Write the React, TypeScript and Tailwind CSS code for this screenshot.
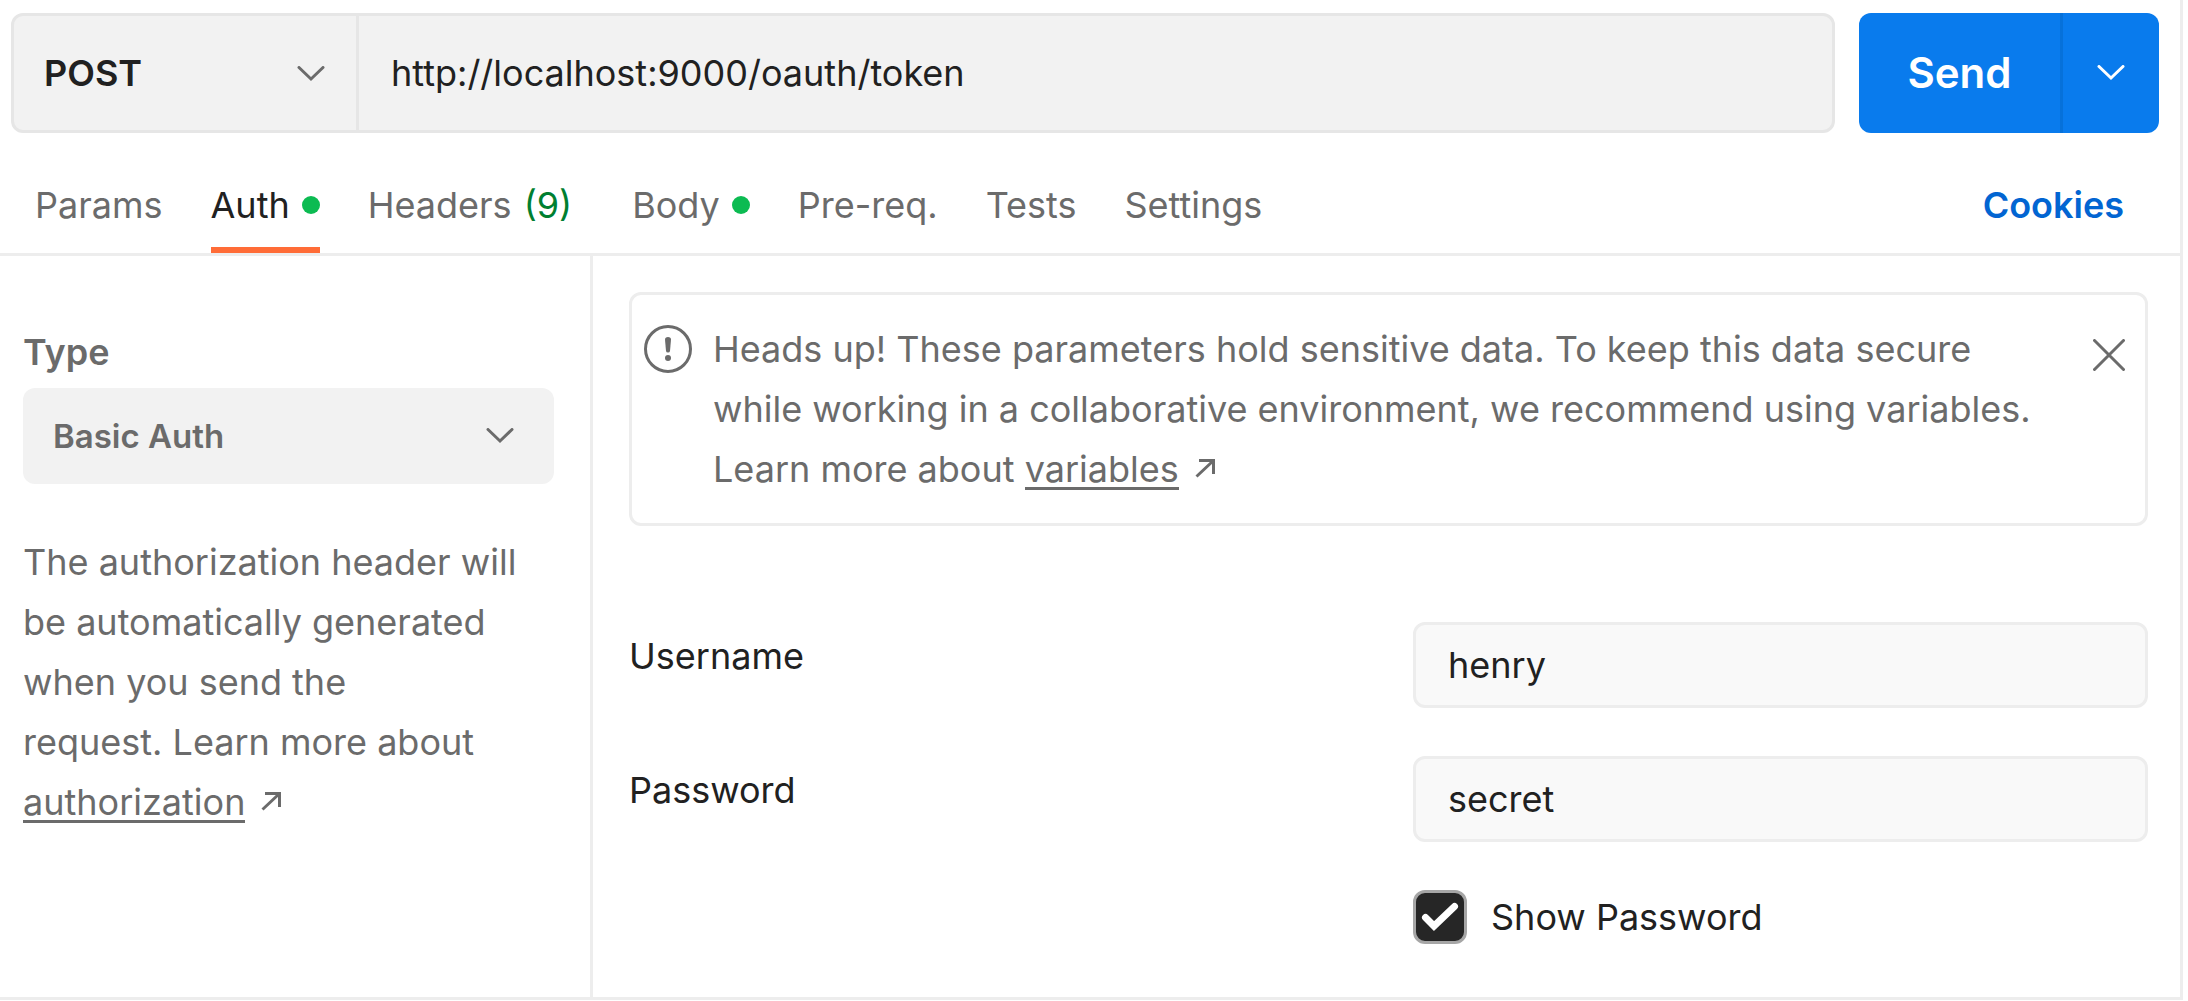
import type { ReactNode } from "react";

const INK = "text-[#212121]";

function Chevron({ className }: { className?: string }) {
  return (
    <svg className={className} viewBox="0 0 28 16" width="28" height="16" fill="none" stroke="currentColor" strokeWidth="3" aria-hidden="true">
      <path d="M2 1.5 14 13 26 1.5" strokeLinecap="round" />
    </svg>
  );
}

function ExternalArrow() {
  return (
    <svg className="mb-1 ml-4 inline-block align-baseline" viewBox="0 0 20 20" width="20" height="20" fill="none" stroke="currentColor" strokeWidth="3" aria-hidden="true">
      <path d="M4 2.5H18.5V16M18 3 1.5 18.5" />
    </svg>
  );
}

function TextLink({ children }: { children: ReactNode }) {
  return (
    <a href="#" className="inline-block border-b-3 border-[#6b6b6b] leading-9">
      {children}
    </a>
  );
}

function Tab({ label, count, dot, active }: { label: string; count?: string; dot?: boolean; active?: boolean }) {
  return (
    <button
      type="button"
      role="tab"
      aria-selected={!!active}
      className={
        active
          ? "flex items-center gap-3 border-b-6 border-[#ff6c37] pt-2.5 text-[#212121]"
          : "flex items-center gap-3 border-b-6 border-transparent pt-2.5"
      }
    >
      {label}
      {count && <span className="mr-3 text-[#007f31]">{count}</span>}
      {dot && <span className="size-4.5 rounded-full bg-[#0cbb52]" />}
    </button>
  );
}

function Field({ id, label, value }: { id: string; label: string; value: string }) {
  return (
    <div className="flex items-start">
      <label htmlFor={id} className="flex-1 pt-3 leading-11">
        {label}
      </label>
      <input
        id={id}
        type="text"
        defaultValue={value}
        className="h-[86px] w-[735px] rounded-xl border-3 border-[#ededed] bg-[#f9f9f9] px-8"
      />
    </div>
  );
}

export default function App() {
  return (
    <div className="min-h-[1001px] bg-white pr-[5px] font-['Inter',sans-serif] text-[36px] leading-[60px] text-[#6b6b6b]">
      <div className="flex min-h-[1000px] flex-col border-r-3 border-b-3 border-[#ededed]">
        <form className={`flex gap-6 pt-[13px] pr-[21px] pl-[11px] ${INK}`} onSubmit={(e) => e.preventDefault()}>
          <div className="flex h-[120px] flex-1 rounded-xl border-3 border-[#e6e6e6] bg-[#f2f2f2]">
            <div className="relative w-[345px] border-r-3 border-[#e6e6e6]">
              <select aria-label="Method" className="size-full appearance-none px-[30px] font-semibold">
                <option>POST</option>
              </select>
              <Chevron className="pointer-events-none absolute top-[50px] right-[31px] text-[#6b6b6b]" />
            </div>
            <input aria-label="Request URL" type="text" defaultValue="http://localhost:9000/oauth/token" className="min-w-0 flex-1 px-8" />
          </div>
          <div className="flex h-[120px] w-[300px] overflow-hidden rounded-xl bg-[#097bed] text-white">
            <button type="submit" className="flex-1 border-r-3 border-[#0671da] text-[42px] font-semibold">
              Send
            </button>
            <button type="button" aria-label="Send options" className="flex w-24 items-center justify-center">
              <Chevron />
            </button>
          </div>
        </form>

        <nav className="flex h-[123px] justify-between border-b-3 border-[#ededed] pt-5 pr-14 pl-[35px]">
          <div role="tablist" className="flex gap-12">
            <Tab label="Params" />
            <Tab label="Auth" dot active />
            <Tab label="Headers" count="(9)" />
            <Tab label="Body" dot />
            <Tab label="Pre-req." />
            <Tab label="Tests" />
            <Tab label="Settings" />
          </div>
          <button type="button" className="border-b-6 border-transparent pt-2.5 font-semibold text-[#0265d2]">
            Cookies
          </button>
        </nav>

        <div className="flex flex-1">
          <aside className="w-[593px] shrink-0 border-r-3 border-[#ededed] px-[23px] pt-[66px]">
            <label htmlFor="auth-type" className="block font-semibold">
              Type
            </label>
            <div className="relative mt-1.5 w-[531px]">
              <select id="auth-type" className="h-24 w-full appearance-none rounded-xl bg-[#f2f2f2] px-[30px] text-[33px] font-semibold">
                <option>Basic Auth</option>
              </select>
              <Chevron className="pointer-events-none absolute top-10 right-10" />
            </div>
            <p className="mt-12 w-[510px]">
              The authorization header will be automatically generated when you send the request.&nbsp;Learn more about{" "}
              <TextLink>authorization</TextLink>
              <ExternalArrow />
            </p>
          </aside>

          <main className="flex-1 pt-9 pr-8 pl-9">
            <div role="alert" className="flex items-start rounded-xl border-3 border-[#ededed] py-6 pr-5 pl-3">
              <svg className="mt-1.5 shrink-0" viewBox="0 0 48 48" width="48" height="48" fill="none" aria-hidden="true">
                <circle cx="24" cy="24" r="22.5" stroke="currentColor" strokeWidth="3" />
                <path d="M21 14.5Q21 12 24 12T27 14.5L26 26Q25.800 27.500 24 27.500T22 26Z" fill="currentColor" />
                <circle cx="24" cy="33" r="3" fill="currentColor" />
              </svg>
              <p className="mr-auto ml-[21px] max-w-[1330px]">
                <span>
                  Heads up! These parameters hold sensitive data. To keep this data secure while working in a collaborative
                  environment, we recommend using variables.
                </span>{" "}
                <span>Learn more about </span>
                <TextLink>variables</TextLink>
                <ExternalArrow />
              </p>
              <button type="button" aria-label="Dismiss" className="mt-5">
                <svg viewBox="0 0 32 32" width="32" height="32" fill="none" stroke="currentColor" strokeWidth="3" strokeLinecap="round" aria-hidden="true">
                  <path d="M1.5 1.5 30.5 30.5M30.5 1.5 1.5 30.5" />
                </svg>
              </button>
            </div>

            <div className={`mt-24 flex flex-col gap-12 ${INK}`}>
              <Field id="username" label="Username" value="henry" />
              <Field id="password" label="Password" value="secret" />
              <label className="flex w-[735px] items-center gap-6 self-end leading-[54px]">
                <span className="relative size-[54px]">
                  <input type="checkbox" defaultChecked className="block size-[54px] appearance-none rounded-xl border-3 border-[#a6a6a6] bg-[#262626]" />
                  <svg className="pointer-events-none absolute inset-0" viewBox="0 0 54 54" fill="none" stroke="#fff" strokeWidth="7" strokeLinecap="round" strokeLinejoin="miter" aria-hidden="true">
                    <path d="M12.500 27.500 21 36 41.500 16.500" />
                  </svg>
                </span>
                Show Password
              </label>
            </div>
          </main>
        </div>
      </div>
    </div>
  );
}
